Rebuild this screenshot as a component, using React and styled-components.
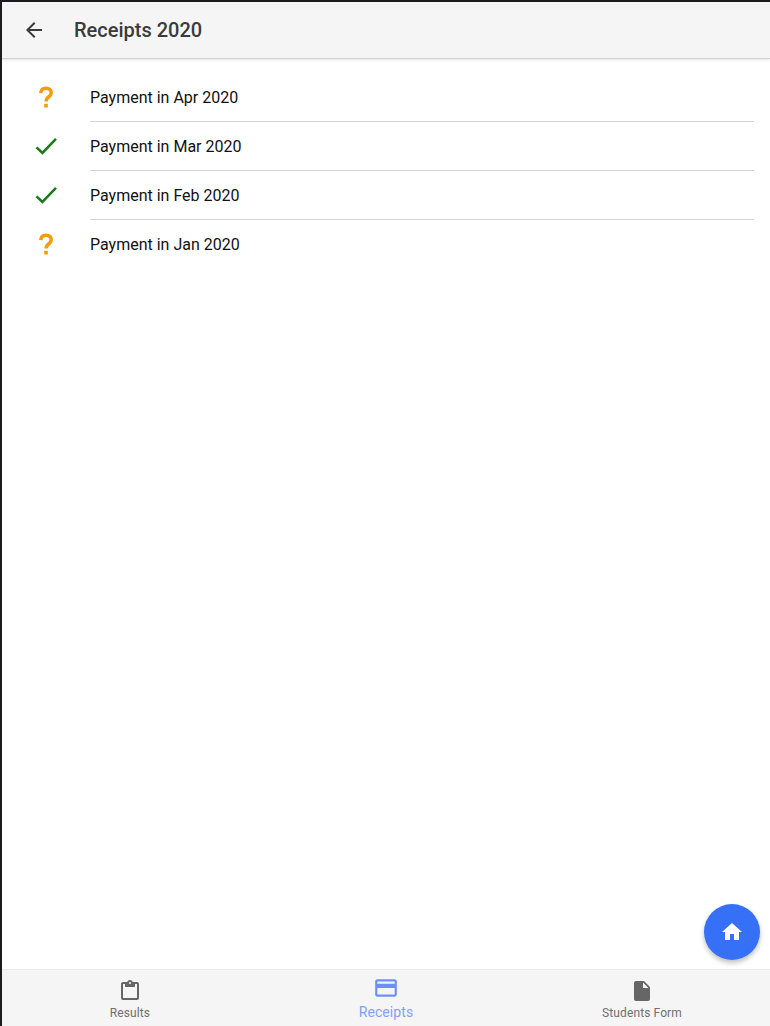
import React from "react";
import styled, { createGlobalStyle } from "styled-components";

const Global = createGlobalStyle`
  html, body { margin: 0; padding: 0; background: #fff; }
  * { box-sizing: border-box; }
  body { font-family: Roboto, "Liberation Sans", sans-serif; }
`;

const Shell = styled.div`
  position: relative;
  width: 770px;
  height: 1026px;
  display: flex;
  flex-direction: column;
  background: #fff;
  border-top: 2px solid #1c1c1e;
  border-left: 2px solid #1c1c1e;
  overflow: hidden;
`;

const Header = styled.header`
  flex: none;
  height: 57px;
  display: flex;
  align-items: center;
  gap: 28px;
  padding-left: 20px;
  padding-bottom: 1px;
  background: #f5f5f5;
  border-bottom: 1px solid #d2d2d2;
  box-shadow: 0 1px 3px rgba(0, 0, 0, 0.12);
`;

const BackButton = styled.button`
  display: flex;
  width: 24px;
  height: 24px;
  padding: 0;
  border: 0;
  background: none;
  color: #3a3a3a;
`;

const Title = styled.h1`
  margin: 0;
  font-size: 20px;
  font-weight: 500;
  color: #3b3b3b;
`;

const List = styled.ul`
  flex: 1;
  margin: 0;
  padding: 14px 16px 0 0;
  list-style: none;
`;

const Row = styled.li`
  display: flex;
  align-items: stretch;
  height: 49px;
`;

const IconSlot = styled.div`
  flex: none;
  width: 88px;
  display: flex;
  align-items: center;
  justify-content: center;
`;

const RowText = styled.div`
  flex: 1;
  display: flex;
  align-items: center;
  font-size: 16px;
  color: #111;
  border-bottom: ${(p) => (p.$last ? "0" : "1px solid #d4d4d4")};
`;

const TabBar = styled.nav`
  flex: none;
  height: 57px;
  display: grid;
  grid-template-columns: repeat(3, 1fr);
  background: #f5f5f5;
  border-top: 1px solid #e9e9e9;
`;

const Tab = styled.div`
  display: flex;
  flex-direction: column;
  align-items: center;
  padding-top: ${(p) => (p.$active ? "5px" : "9px")};
  color: ${(p) => (p.$active ? "#82a0fb" : "#6f6f6f")};
`;

const TabIcon = styled.span`
  display: flex;
  color: ${(p) => (p.$active ? "#6d8ffa" : "#666")};
`;

const TabLabel = styled.span`
  font-size: ${(p) => (p.$active ? "14px" : "12px")};
  line-height: 14px;
  margin-top: ${(p) => (p.$active ? "4px" : "3px")};
  letter-spacing: 0.1px;
`;

const Fab = styled.button`
  position: absolute;
  right: 10px;
  bottom: 66px;
  width: 56px;
  height: 56px;
  display: flex;
  align-items: center;
  justify-content: center;
  padding: 0;
  border: 0;
  border-radius: 50%;
  background: #3570f6;
  color: #fff;
  box-shadow: 0 3px 5px rgba(0, 0, 0, 0.25);
`;

const Question = () => (
  <svg width="24" height="28" viewBox="0 0 24 28" fill="none">
    <path d="M6.7 9.2c.2-3.2 2.3-5 5.3-5 3.1 0 5.2 1.8 5.2 4.5 0 2-1 3.1-2.6 4.3-1.7 1.3-2.5 2.2-2.5 4.6" stroke="#f39c12" strokeWidth="3.5" />
    <rect x="10.2" y="19.8" width="3.6" height="3.7" fill="#f39c12" />
  </svg>
);

const Check = () => (
  <svg width="24" height="24" viewBox="0 0 24 24" fill="none">
    <path d="M2.5 12.3l5.9 5.6L22 3.9" stroke="#1a7a1a" strokeWidth="2.5" />
  </svg>
);

const items = [
  { label: "Payment in Apr 2020", ok: false },
  { label: "Payment in Mar 2020", ok: true },
  { label: "Payment in Feb 2020", ok: true },
  { label: "Payment in Jan 2020", ok: false },
];

export default function App() {
  return (
    <>
      <Global />
      <Shell>
        <Header>
          <BackButton aria-label="Back">
            <svg width="24" height="24" viewBox="0 0 24 24" fill="currentColor">
              <path d="M20 11H7.83l5.59-5.59L12 4l-8 8 8 8 1.41-1.41L7.83 13H20v-2z" />
            </svg>
          </BackButton>
          <Title>Receipts 2020</Title>
        </Header>
        <List>
          {items.map((it, i) => (
            <Row key={it.label}>
              <IconSlot>{it.ok ? <Check /> : <Question />}</IconSlot>
              <RowText $last={i === items.length - 1}>{it.label}</RowText>
            </Row>
          ))}
        </List>
        <TabBar>
          <Tab>
            <TabIcon>
              <svg width="24" height="24" viewBox="0 0 24 24" fill="currentColor">
                <path d="M19 3h-4.18C14.4 1.84 13.3 1 12 1s-2.4.84-2.82 2H5c-1.1 0-2 .9-2 2v14c0 1.1.9 2 2 2h14c1.1 0 2-.9 2-2V5c0-1.1-.9-2-2-2zm-7 0c.55 0 1 .45 1 1s-.45 1-1 1-1-.45-1-1 .45-1 1-1zm7 16H5V5h2v3h10V5h2v14z" />
              </svg>
            </TabIcon>
            <TabLabel>Results</TabLabel>
          </Tab>
          <Tab $active>
            <TabIcon $active>
              <svg width="26" height="26" viewBox="0 0 24 24" fill="currentColor">
                <path d="M20 4H4c-1.11 0-1.99.89-1.99 2L2 18c0 1.11.89 2 2 2h16c1.11 0 2-.89 2-2V6c0-1.11-.89-2-2-2zm0 14H4v-6h16v6zm0-10H4V6h16v2z" />
              </svg>
            </TabIcon>
            <TabLabel $active>Receipts</TabLabel>
          </Tab>
          <Tab>
            <TabIcon>
              <svg width="24" height="24" viewBox="0 0 24 24" fill="currentColor">
                <path d="M6 2c-1.1 0-1.99.9-1.99 2L4 20c0 1.1.89 2 1.99 2H18c1.1 0 2-.9 2-2V8l-6-6H6zm7 7V3.5L18.5 9H13z" />
              </svg>
            </TabIcon>
            <TabLabel>Students Form</TabLabel>
          </Tab>
        </TabBar>
        <Fab aria-label="Home">
          <svg width="24" height="24" viewBox="0 0 24 24" fill="currentColor">
            <path d="M10 20v-6h4v6h5v-8h3L12 3 2 12h3v8z" />
          </svg>
        </Fab>
      </Shell>
    </>
  );
}
